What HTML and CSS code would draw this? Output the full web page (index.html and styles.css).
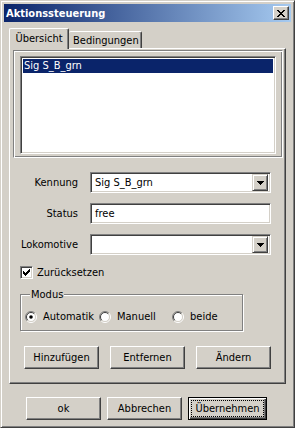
FILE: index.html
```html
<!DOCTYPE html>
<html lang="de">
<head>
  <meta charset="UTF-8">
  <title>Aktionssteuerung</title>
  <link rel="stylesheet" href="styles.css">
</head>
<body>
  <div class="window">
    <div class="titlebar">
      <span class="title">Aktionssteuerung</span>
      <span class="close-btn">
        <svg width="8" height="7" viewBox="0 0 8 7" shape-rendering="crispEdges">
          <path d="M0 0h2v1h-2zM6 0h2v1h-2zM1 1h2v1h-2zM5 1h2v1h-2zM2 2h4v1h-4zM3 3h2v1h-2zM2 4h4v1h-4zM1 5h2v1h-2zM5 5h2v1h-2zM0 6h2v1h-2zM6 6h2v1h-2z" fill="#000"/>
        </svg>
      </span>
    </div>

    <div class="content">
      <div class="tabs">
        <div class="tab active">Übersicht</div>
        <div class="tab">Bedingungen</div>
      </div>

      <div class="panel">
        <div class="list-frame">
          <div class="listbox">
            <div class="list-item selected">Sig S_B_grn</div>
          </div>
        </div>

        <div class="form">
          <span class="label">Kennung</span>
          <div class="combo">
            <span class="value">Sig S_B_grn</span>
            <span class="drop-btn"><svg width="7" height="4" viewBox="0 0 7 4" shape-rendering="crispEdges"><path d="M0 0h7v1h-7zM1 1h5v1h-5zM2 2h3v1h-3zM3 3h1v1h-1z" fill="#000"/></svg></span>
          </div>

          <span class="label">Status</span>
          <div class="field"><span class="value">free</span></div>

          <span class="label">Lokomotive</span>
          <div class="combo">
            <span class="value"></span>
            <span class="drop-btn"><svg width="7" height="4" viewBox="0 0 7 4" shape-rendering="crispEdges"><path d="M0 0h7v1h-7zM1 1h5v1h-5zM2 2h3v1h-3zM3 3h1v1h-1z" fill="#000"/></svg></span>
          </div>
        </div>

        <div class="check-row">
          <span class="checkbox">
            <svg width="7" height="7" viewBox="0 0 7 7" shape-rendering="crispEdges"><path d="M6 0h1v3h-1zM5 1h1v3h-1zM0 2h1v3h-1zM4 2h1v3h-1zM1 3h1v3h-1zM3 3h1v3h-1zM2 4h1v3h-1z" fill="#000"/></svg>
          </span>
          <span>Zurücksetzen</span>
        </div>

        <fieldset class="group">
          <legend>Modus</legend>
          <div class="radio-row">
            <span class="radio-opt">
              <svg class="radio" width="12" height="12" viewBox="0 0 12 12">
                <circle cx="6" cy="6" r="4.5" fill="#fff"/>
                <path d="M2.1 9.9A5.5 5.5 0 0 1 9.9 2.1" stroke="#808080" fill="none"/>
                <path d="M9.9 2.1A5.5 5.5 0 0 1 2.1 9.9" stroke="#fff" fill="none"/>
                <path d="M2.8 9.2A4.5 4.5 0 0 1 9.2 2.8" stroke="#404040" fill="none"/>
                <path d="M9.2 2.8A4.5 4.5 0 0 1 2.8 9.2" stroke="#d4d0c8" fill="none"/>
                <circle cx="6" cy="6" r="1.8" fill="#000"/>
              </svg>
              Automatik
            </span>
            <span class="radio-opt">
              <svg class="radio" width="12" height="12" viewBox="0 0 12 12">
                <circle cx="6" cy="6" r="4.5" fill="#fff"/>
                <path d="M2.1 9.9A5.5 5.5 0 0 1 9.9 2.1" stroke="#808080" fill="none"/>
                <path d="M9.9 2.1A5.5 5.5 0 0 1 2.1 9.9" stroke="#fff" fill="none"/>
                <path d="M2.8 9.2A4.5 4.5 0 0 1 9.2 2.8" stroke="#404040" fill="none"/>
                <path d="M9.2 2.8A4.5 4.5 0 0 1 2.8 9.2" stroke="#d4d0c8" fill="none"/>
              </svg>
              Manuell
            </span>
            <span class="radio-opt">
              <svg class="radio" width="12" height="12" viewBox="0 0 12 12">
                <circle cx="6" cy="6" r="4.5" fill="#fff"/>
                <path d="M2.1 9.9A5.5 5.5 0 0 1 9.9 2.1" stroke="#808080" fill="none"/>
                <path d="M9.9 2.1A5.5 5.5 0 0 1 2.1 9.9" stroke="#fff" fill="none"/>
                <path d="M2.8 9.2A4.5 4.5 0 0 1 9.2 2.8" stroke="#404040" fill="none"/>
                <path d="M9.2 2.8A4.5 4.5 0 0 1 2.8 9.2" stroke="#d4d0c8" fill="none"/>
              </svg>
              beide
            </span>
          </div>
        </fieldset>

        <div class="action-row">
          <div class="btn">Hinzufügen</div>
          <div class="btn">Entfernen</div>
          <div class="btn">Ändern</div>
        </div>
      </div>

      <div class="dialog-buttons">
        <div class="btn">ok</div>
        <div class="btn">Abbrechen</div>
        <div class="btn default"><span class="focus">Übernehmen</span></div>
      </div>
    </div>
  </div>
</body>
</html>
```

FILE: styles.css
```css
* {
  box-sizing: border-box;
}
body {
  margin: 0;
  background: #d4d0c8;
  font-family: "DejaVu Sans Condensed", "Liberation Sans", sans-serif;
  font-size: 11px;
  color: #000;
}
.window {
  width: 295px;
  height: 428px;
  padding: 3px;
  background: #d4d0c8;
  border: 1px solid;
  border-color: #d4d0c8 #404040 #404040 #d4d0c8;
  box-shadow: inset 1px 1px #fff, inset -1px -1px #808080;
}
.titlebar {
  height: 18px;
  display: flex;
  justify-content: space-between;
  align-items: center;
  padding: 0 2px;
  background: linear-gradient(to right, #0a246a, #a6caf0);
}
.title {
  color: #fff;
  font-weight: bold;
  font-family: "DejaVu Sans Condensed", "Liberation Sans", sans-serif;
  font-size: 11px;
}
.close-btn {
  width: 16px;
  height: 14px;
  display: flex;
  align-items: center;
  justify-content: center;
  background: #d4d0c8;
  border: 1px solid;
  border-color: #fff #404040 #404040 #fff;
  box-shadow: inset -1px -1px #808080;
}

.content {
  padding: 6px 0 0 5px;
}
.tabs {
  display: flex;
  align-items: flex-end;
  height: 20px;
}
.tab {
  height: 17px;
  padding: 2px 4px 0;
  border-top: 1px solid #fff;
  border-left: 1px solid #fff;
  border-right: 1px solid #404040;
  box-shadow: inset -1px 0 #808080;
  border-radius: 2px 2px 0 0;
  text-align: center;
}
.tab.active {
  width: 60px;
  height: 21px;
  margin-bottom: -1px;
  padding-top: 3px;
  position: relative;
  z-index: 2;
  background: #d4d0c8;
}
.tab:not(.active) {
  width: 73px;
  border-left: none;
}

.panel {
  width: 277px;
  height: 336px;
  padding: 1px 3px 0;
  border: 1px solid;
  border-color: #fff #404040 #404040 #fff;
  box-shadow: inset -1px -1px #808080;
}
.list-frame {
  width: 270px;
  height: 108px;
  padding: 5px 6px 0;
  border: 1px solid;
  border-color: #808080 #fff #fff #808080;
  box-shadow: inset 1px 1px #fff, inset -1px -1px #808080;
}
.listbox {
  height: 98px;
  background: #fff;
  border: 1px solid;
  border-color: #808080 #fff #fff #808080;
  box-shadow: inset 1px 1px #404040, inset -1px -1px #d4d0c8;
  padding: 2px;
}
.list-item {
  height: 14px;
  line-height: 14px;
  padding-left: 1px;
}
.list-item.selected {
  background: #0a246a;
  color: #fff;
}

.form {
  display: grid;
  grid-template-columns: 65px 181px;
  grid-auto-rows: 21px;
  column-gap: 12px;
  row-gap: 10px;
  margin-top: 14px;
  align-items: center;
}
.label {
  text-align: right;
}
.combo, .field {
  height: 21px;
  display: flex;
  align-items: center;
  background: #fff;
  border: 1px solid;
  border-color: #808080 #fff #fff #808080;
  box-shadow: inset 1px 1px #404040, inset -1px -1px #d4d0c8;
  padding: 2px;
}
.value {
  flex: 1;
  padding-left: 2px;
}
.drop-btn {
  width: 16px;
  height: 17px;
  display: flex;
  align-items: center;
  justify-content: center;
  background: #d4d0c8;
  border: 1px solid;
  border-color: #d4d0c8 #404040 #404040 #d4d0c8;
  box-shadow: inset 1px 1px #fff, inset -1px -1px #808080;
}

.check-row {
  display: flex;
  align-items: center;
  gap: 4px;
  margin: 11px 0 0 7px;
  height: 13px;
}
.checkbox {
  width: 13px;
  height: 13px;
  display: flex;
  align-items: center;
  justify-content: center;
  background: #fff;
  border: 1px solid;
  border-color: #808080 #fff #fff #808080;
  box-shadow: inset 1px 1px #404040, inset -1px -1px #d4d0c8;
}

.group {
  width: 223px;
  margin: 9px 0 0 7px;
  padding: 9px 4px 7px;
  border: 1px solid #808080;
  box-shadow: inset 1px 1px #fff, 1px 1px #fff;
}
.group legend {
  margin-left: 5px;
  padding: 0 1px;
  background: #d4d0c8;
  line-height: 13px;
}
.radio-row {
  display: grid;
  grid-template-columns: 74px 73px auto;
  height: 13px;
  align-items: center;
}
.radio-opt {
  display: flex;
  align-items: center;
  gap: 6px;
}

.btn {
  width: 75px;
  height: 23px;
  display: flex;
  align-items: center;
  justify-content: center;
  background: #d4d0c8;
  border: 1px solid;
  border-color: #fff #404040 #404040 #fff;
  box-shadow: inset -1px -1px #808080;
}
.action-row {
  display: flex;
  gap: 11px;
  margin: 15px 0 0 11px;
}
.dialog-buttons {
  display: flex;
  gap: 6px;
  margin: 13px 0 0 17px;
}
.btn.default {
  width: 79px;
  border: 1px solid #000;
  box-shadow: inset 1px 1px #fff, inset -1px -1px #404040, inset -2px -2px #808080;
  padding: 3px;
}
.focus {
  flex: 1;
  height: 100%;
  display: flex;
  align-items: center;
  justify-content: center;
  outline: 1px dotted #000;
}
```
